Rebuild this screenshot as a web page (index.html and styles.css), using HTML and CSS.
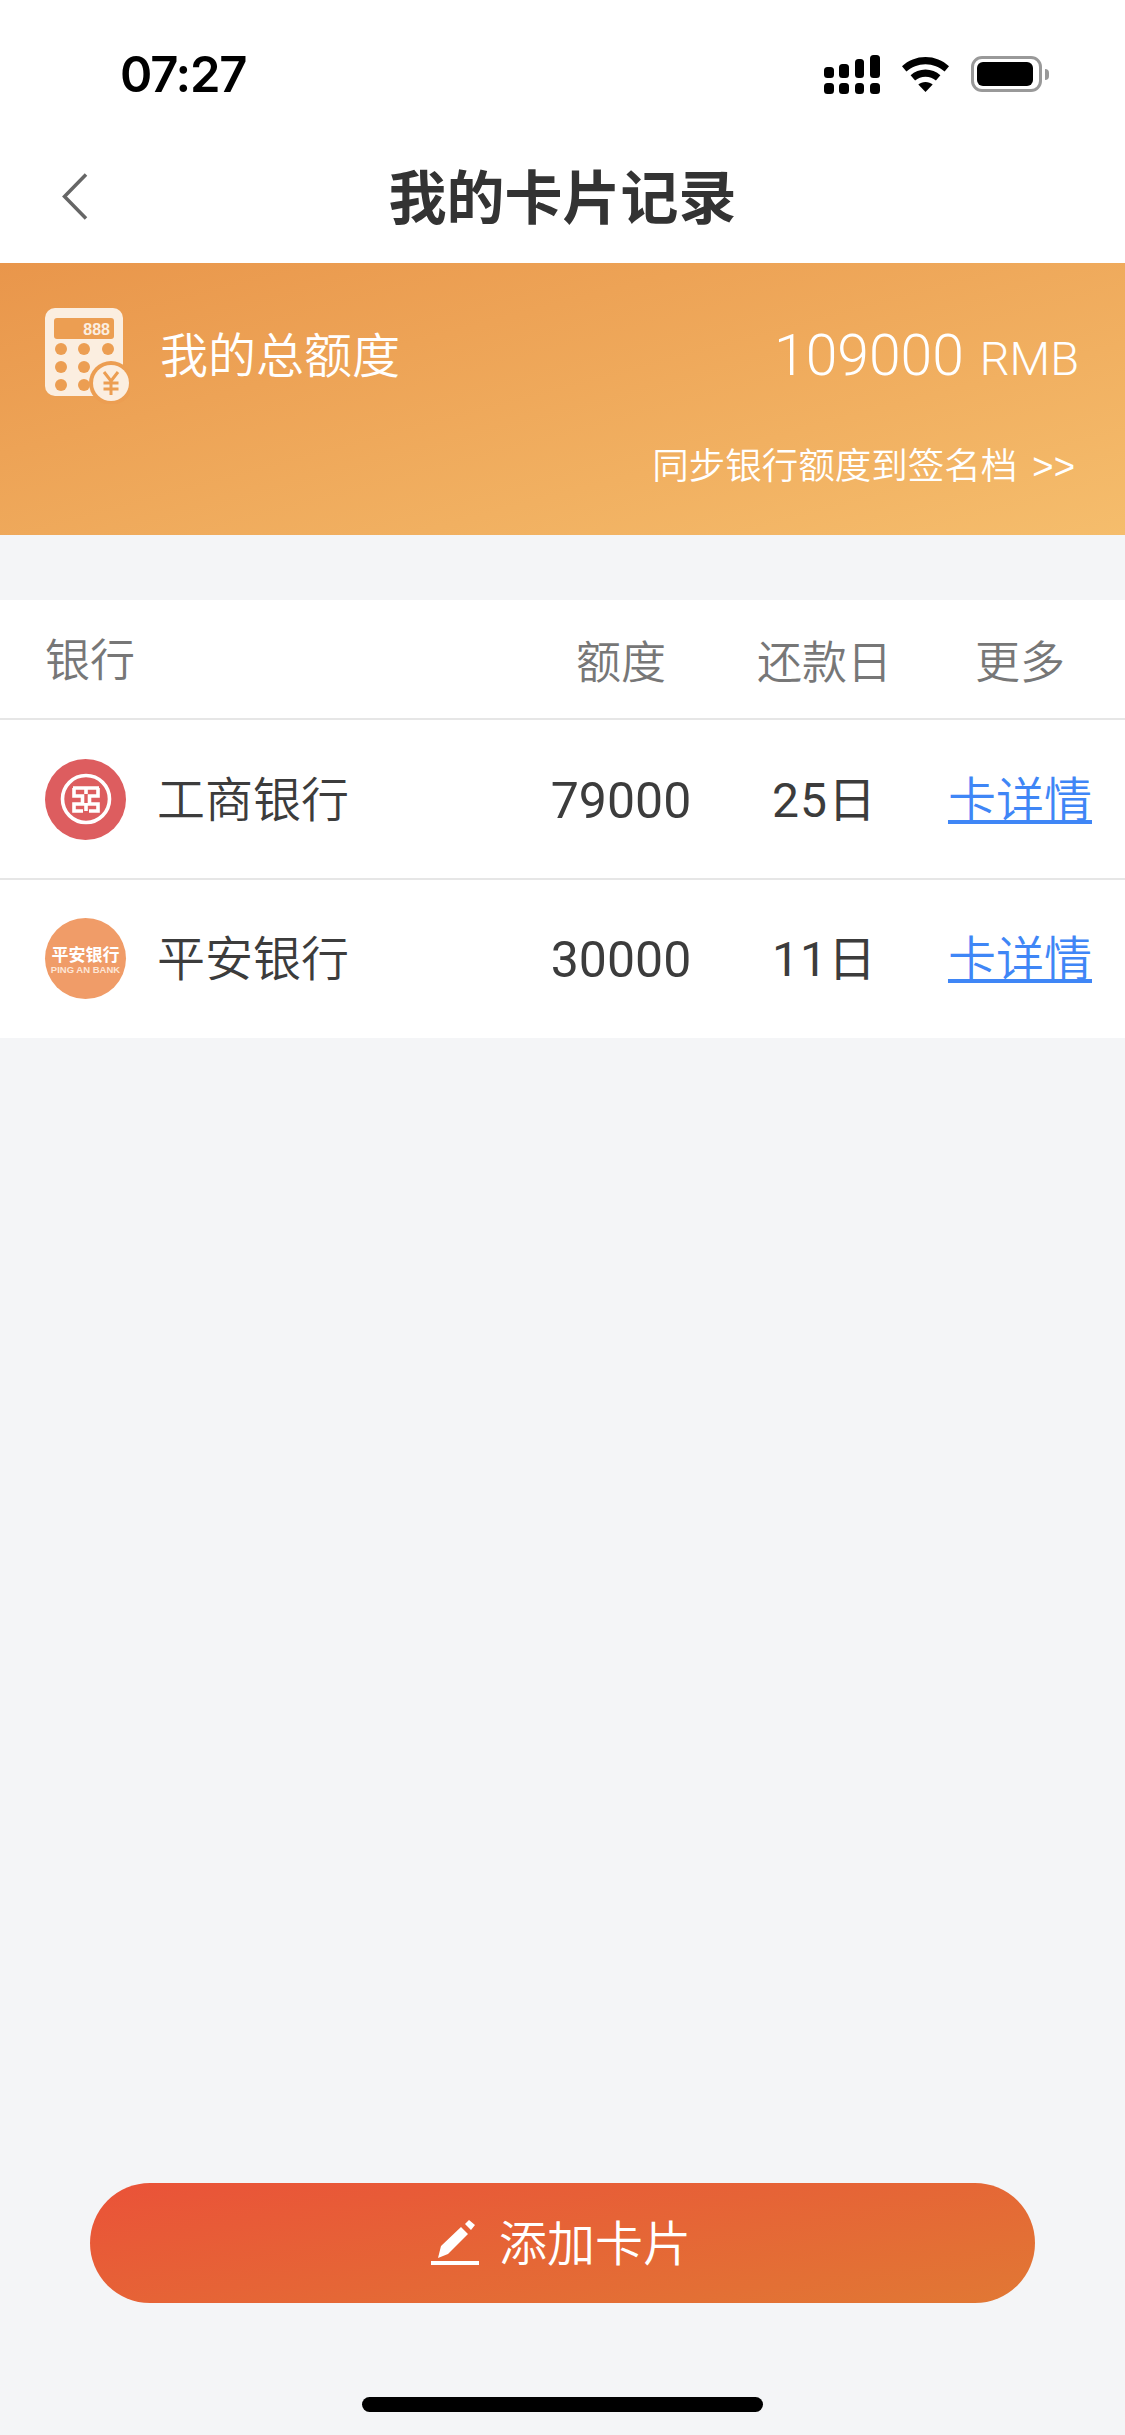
FILE: index.html
```html
<!DOCTYPE html>
<html lang="zh-CN">
<head>
  <meta charset="UTF-8">
  <title>我的卡片记录</title>
  <link rel="stylesheet" href="styles.css">
</head>
<body>
  <div class="page">

    <!-- Status bar -->
    <div class="status-bar">
      <span class="clock">07:27</span>
      <div class="status-icons">
        <svg class="ico-signal" width="56" height="39" viewBox="0 0 56 39">
          <rect x="0" y="12" width="10" height="11" rx="3.5"/>
          <rect x="15" y="9" width="10" height="14" rx="3.5"/>
          <rect x="31" y="4" width="9" height="19" rx="3.5"/>
          <rect x="46" y="0" width="10" height="23" rx="3.5"/>
          <rect x="0" y="28" width="10" height="11" rx="3.5"/>
          <rect x="15" y="28" width="10" height="11" rx="3.5"/>
          <rect x="31" y="28" width="9" height="11" rx="3.5"/>
          <rect x="46" y="28" width="10" height="11" rx="3.5"/>
        </svg>
        <svg class="ico-wifi" width="47" height="35" viewBox="0 0 47 35">
          <path d="M23.5 0C14.5 0 6.3 3.4 0 9.2l4.4 5.4C9.500 10 16.200 7.200 23.500 7.200S37.500 10 42.600 14.600L47 9.200C40.700 3.400 32.500 0 23.500 0Z"/>
          <path d="M23.500 12.500c-5.700 0-10.900 2.100-14.900 5.700l4.500 5.400c2.800-2.400 6.400-3.900 10.400-3.900s7.600 1.500 10.400 3.900l4.500-5.400c-4-3.600-9.200-5.700-14.900-5.700Z"/>
          <path d="M23.500 25c-2.800 0-5.300 1-7.200 2.600L23.500 35l7.200-7.400C28.800 26 26.300 25 23.500 25Z"/>
        </svg>
        <div class="battery"><div class="battery-fill"></div></div>
      </div>
    </div>

    <!-- Nav -->
    <div class="nav">
      <svg class="back" width="26" height="47" viewBox="0 0 26 47">
        <path d="M24 1.500 2.500 23.500 24 45.500" fill="none" stroke="#666" stroke-width="3.500"/>
      </svg>
      <h1>我的卡片记录</h1>
    </div>

    <!-- Total -->
    <div class="banner">
      <div class="banner-top">
        <svg class="calc" width="85" height="96" viewBox="0 0 85 96">
          <rect x="0" y="0" width="78" height="88" rx="10" fill="#fbeee0"/>
          <rect x="9" y="10" width="60" height="21" rx="3" fill="#ec9e52"/>
          <text x="65" y="27" text-anchor="end" class="calc-digits">888</text>
          <circle cx="16" cy="41" r="6" fill="#ec9e52"/>
          <circle cx="39" cy="41" r="6" fill="#ec9e52"/>
          <circle cx="63" cy="41" r="6" fill="#ec9e52"/>
          <circle cx="16" cy="59" r="6" fill="#ec9e52"/>
          <circle cx="39" cy="59" r="6" fill="#ec9e52"/>
          <circle cx="16" cy="77" r="6" fill="#ec9e52"/>
          <circle cx="39" cy="77" r="6" fill="#ec9e52"/>
          <circle cx="66" cy="75" r="22" fill="#ec9e52"/>
          <circle cx="66" cy="75" r="18" fill="#fbeee0"/>
          <path d="M59 64l7 9 7-9M66 73v14M58.500 75h15M58.500 81h15" fill="none" stroke="#ec9e52" stroke-width="3"/>
        </svg>
        <span class="banner-label">我的总额度</span>
        <span class="banner-amount">109000 <small>RMB</small></span>
      </div>
      <div class="banner-sync">同步银行额度到签名档 &gt;&gt;</div>
    </div>

    <!-- Cards -->
    <div class="card-table">
      <div class="row head">
        <div class="cell-name">银行</div>
        <div class="cell">额度</div>
        <div class="cell">还款日</div>
        <div class="cell">更多</div>
      </div>
      <div class="row">
        <div class="cell-name">
          <svg class="logo" width="81" height="81" viewBox="0 0 81 81">
            <circle cx="40.500" cy="40.500" r="40.500" fill="#dd5d5f"/>
            <circle cx="41" cy="40" r="23.500" fill="none" stroke="#fff" stroke-width="3.600"/>
            <path d="M28 29H54M41 29V35M29 29V37H37.500V45H29V52H38M53 29V37H44.500V45H53V52H44M41 44V52" fill="none" stroke="#fff" stroke-width="3.600"/>
          </svg>
          <span class="bank-name">工商银行</span>
        </div>
        <div class="cell num">79000</div>
        <div class="cell day">25日</div>
        <div class="cell"><a class="detail" href="#">卡详情</a></div>
      </div>
      <div class="row">
        <div class="cell-name">
          <div class="logo logo-pingan">
            <span class="pa-cn">平安银行</span>
            <span class="pa-en">PING AN BANK</span>
          </div>
          <span class="bank-name">平安银行</span>
        </div>
        <div class="cell num">30000</div>
        <div class="cell day">11日</div>
        <div class="cell"><a class="detail" href="#">卡详情</a></div>
      </div>
    </div>

    <!-- Bottom -->
    <div class="footer">
      <button class="add-btn">
        <svg width="48" height="46" viewBox="5 6 48 46">
          <path d="M12 44 15 32 35 13 42 20 22 40ZM39 10 43 6 49 11 45 16Z" fill="#fff"/>
          <rect x="5" y="47" width="48" height="4" fill="#fff"/>
        </svg>
        <span class="add-label">添加卡片</span>
      </button>
      <div class="home-bar"></div>
    </div>

  </div>
</body>
</html>
```

FILE: styles.css
```css
* {
  box-sizing: border-box;
}

body {
  margin: 0;
  background-color: #f4f5f7;
  font-family: 'Liberation Sans', 'Noto Sans CJK SC', sans-serif;
  color: #333;
}

.page {
  width: 1125px;
  height: 2435px;
  display: flex;
  flex-direction: column;
}

/* status bar */
.status-bar {
  height: 130px;
  background-color: #fff;
  display: flex;
  justify-content: space-between;
  padding: 53px 83px 0 120px;
}

.clock {
  font-family: 'Inter', sans-serif;
  font-weight: 600;
  font-size: 49px;
  letter-spacing: -1.2px;
  line-height: 44px;
  color: #000;
}

.status-icons {
  display: flex;
  align-items: flex-start;
  gap: 22px;
}

.ico-signal {
  margin-top: 2px;
}

.ico-wifi {
  margin-top: 4px;
}

.battery {
  position: relative;
  width: 71px;
  height: 36px;
  margin-top: 3px;
  border: 3px solid #999;
  border-radius: 11px;
  padding: 3px;
}

.battery:after {
  content: "";
  position: absolute;
  right: -10px;
  top: 10px;
  width: 4px;
  height: 11px;
  background-color: #999;
  border-radius: 0 4px 4px 0;
}

.battery-fill {
  width: 56px;
  height: 24px;
  background-color: #000;
  border-radius: 6px;
}

/* nav */
.nav {
  height: 133px;
  background-color: #fff;
  position: relative;
  display: flex;
  align-items: center;
  justify-content: center;
  padding-bottom: 5px;
}

.back {
  position: absolute;
  left: 62px;
  top: 43px;
}

.nav h1 {
  margin: 0;
  font-size: 58px;
  font-weight: 700;
  color: #333;
}

/* total banner */
.banner {
  height: 272px;
  background: linear-gradient(165deg, #e9964b 0%, #f5bd6c 100%);
  color: #fff;
  padding: 45px 46px 0 45px;
}

.banner-top {
  display: flex;
  align-items: flex-start;
}

.calc {
  flex: none;
}

.calc-digits {
  font-family: 'Liberation Sans', sans-serif;
  font-size: 16px;
  font-weight: 700;
  fill: #fbeee0;
}

.banner-label {
  margin: 19px 0 0 30px;
  font-size: 48px;
  line-height: 60px;
  font-weight: 350;
  color: #fff;
}

.banner-amount {
  margin: 16px 0 0 auto;
  font-family: 'Roboto', sans-serif;
  font-size: 57px;
  line-height: 64px;
  font-weight: 300;
  word-spacing: 2px;
  color: #fff;
}

.banner-amount small {
  font-size: 47px;
}

.banner-sync {
  margin-top: 41px;
  margin-right: 4px;
  text-align: right;
  font-size: 36.500px;
  line-height: 44px;
  font-weight: 350;
  word-spacing: 5px;
  color: #fff;
}

/* table */
.card-table {
  margin-top: 65px;
  background-color: #fff;
}

.row {
  display: grid;
  grid-template-columns: 521px 200px 207px 184px;
  height: 160px;
  align-items: center;
  font-size: 48px;
  line-height: 60px;
  font-weight: 350;
  color: #3c3c3c;
  border-bottom: 2px solid #e6e6e6;
}

.row:last-child {
  height: 158px;
  padding-bottom: 2px;
  border-bottom: none;
}

.row.head {
  height: 120px;
  padding-top: 6px;
  font-size: 45px;
  color: #777;
}

.cell-name {
  display: flex;
  align-items: center;
  gap: 31px;
  padding-left: 45px;
}

.bank-name {
  padding-top: 3px;
}

.cell {
  text-align: center;
  padding-top: 3px;
}

.num,
.day {
  font-family: 'Roboto', 'Noto Sans CJK SC', sans-serif;
  font-weight: 400;
}

.num {
  font-size: 50px;
}

.day {
  letter-spacing: 1px;
}

.logo {
  flex: none;
  width: 81px;
  height: 81px;
}

.logo-pingan {
  border-radius: 50%;
  background-color: #f09c68;
  color: #fff;
  display: flex;
  flex-direction: column;
  align-items: center;
  justify-content: center;
  padding-top: 6px;
}

.pa-cn {
  font-size: 17px;
  line-height: 18px;
  font-weight: 700;
}

.pa-en {
  font-size: 9.500px;
  line-height: 10px;
  font-weight: 700;
  color: #fde6d6;
}

.detail {
  color: #3f86f6;
}

/* bottom */
.footer {
  margin-top: auto;
  display: flex;
  flex-direction: column;
  align-items: center;
  padding-bottom: 23px;
}

.add-btn {
  width: 945px;
  height: 120px;
  border: none;
  border-radius: 60px;
  padding: 0 3px 0 0;
  background: linear-gradient(170deg, #ea5238 0%, #e17834 100%);
  color: #fff;
  font-family: inherit;
  font-size: 48px;
  line-height: 60px;
  font-weight: 350;
  display: flex;
  align-items: center;
  justify-content: center;
  gap: 20px;
}

.add-label {
  padding-top: 3px;
}

.home-bar {
  width: 401px;
  height: 15px;
  margin-top: 94px;
  background-color: #000;
  border-radius: 8px;
}
```
